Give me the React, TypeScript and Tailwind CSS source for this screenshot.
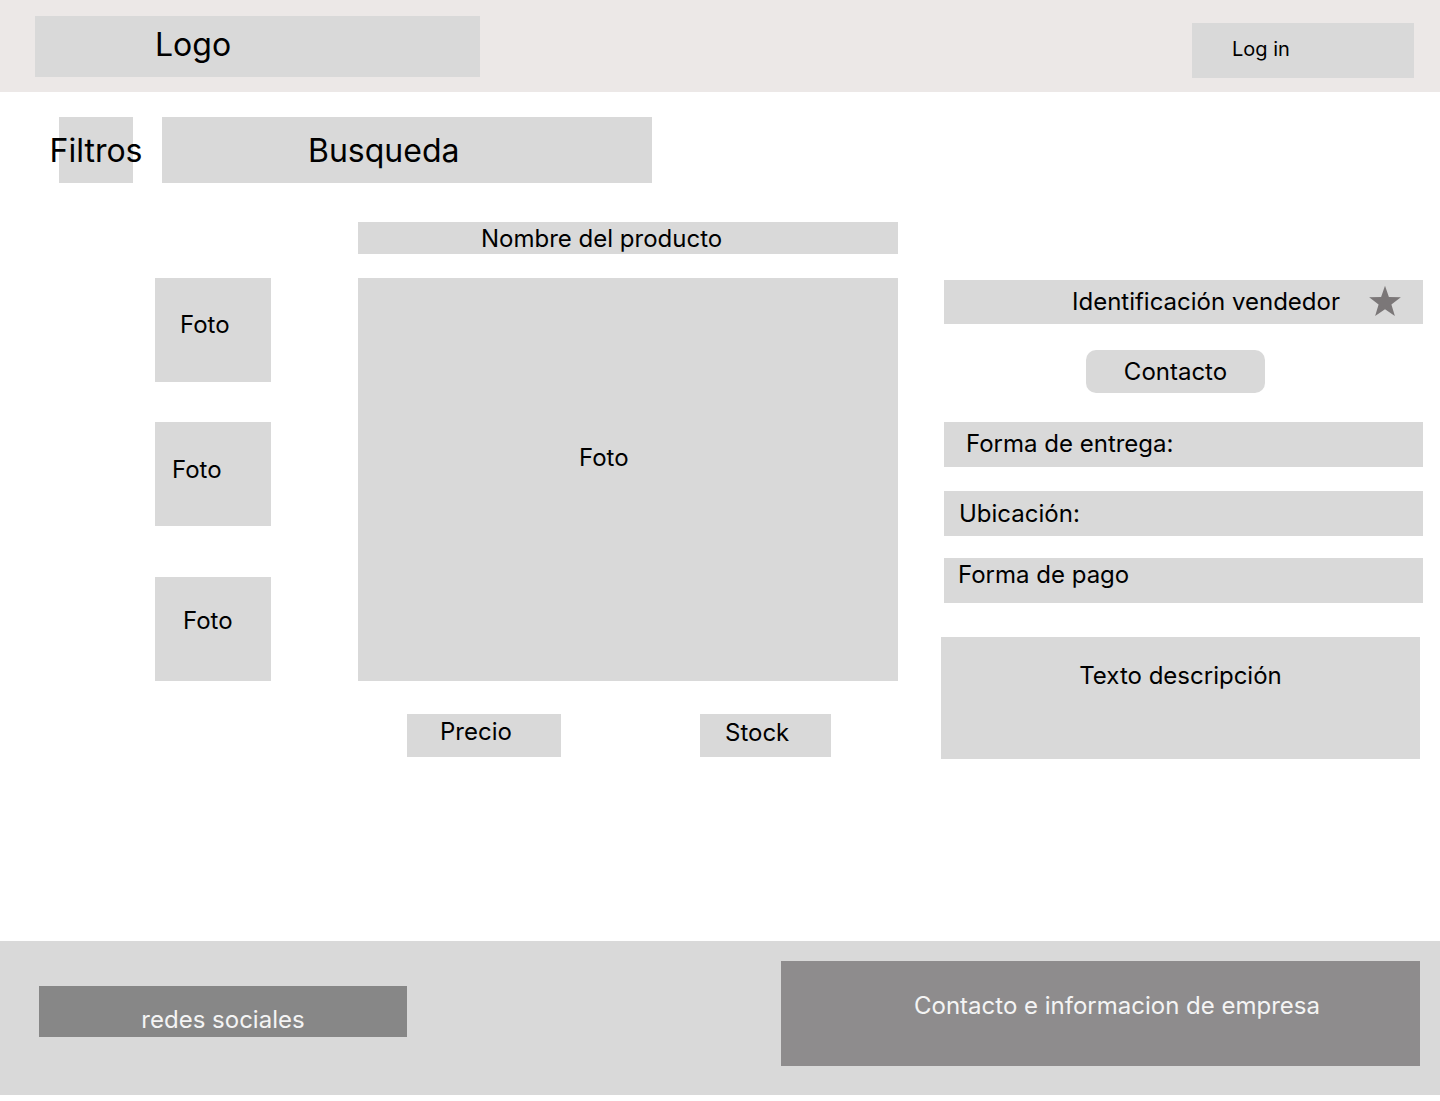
const font = { fontFamily: "Inter, 'Noto Sans', sans-serif" };

function Thumb({ pt, pl, mt }: { pt: string; pl: string; mt: string }) {
  return (
    <div className={`w-[116px] h-[104px] bg-[#d9d9d9] ${mt}`}>
      <div className={`${pt} ${pl} text-[24px] leading-[29px] text-black`}>Foto</div>
    </div>
  );
}

function Star() {
  return (
    <svg width="34" height="32" viewBox="0 0 24 23" className="shrink-0">
      <polygon
        points="12,0.5 14.8,8.6 23.4,8.8 16.6,14 19.1,22.3 12,17.4 4.9,22.3 7.4,14 0.6,8.8 9.2,8.6"
        fill="#7b7778"
      />
    </svg>
  );
}

export default function App() {
  return (
    <div className="w-[1440px] h-[1101px] bg-white flex flex-col text-black" style={font}>
      {/* Header */}
      <header className="h-[92px] shrink-0 bg-[#ece8e7] flex items-start">
        <div className="ml-[35px] mt-[16px] w-[445px] h-[61px] bg-[#d9d9d9] pt-[9px] pl-[120px] text-[32px] leading-[39px]">
          Logo
        </div>
        <div className="ml-auto mr-[26px] mt-[23px] w-[222px] h-[55px] bg-[#d9d9d9] pt-[14px] pl-[40px] text-[20px] leading-[24px]">
          Log in
        </div>
      </header>

      {/* Search row */}
      <div className="h-[91px] shrink-0 flex items-end">
        <div className="ml-[59px] w-[74px] h-[66px] bg-[#d9d9d9] flex items-center justify-center overflow-visible">
          <span className="whitespace-nowrap text-[32px] leading-[39px]">Filtros</span>
        </div>
        <div className="ml-[29px] w-[490px] h-[66px] bg-[#d9d9d9] flex items-center pl-[146px] text-[32px] leading-[39px]">
          Busqueda
        </div>
      </div>

      {/* Product */}
      <main className="h-[758px] shrink-0 flex items-start pl-[155px] pt-[39px]">
        <div className="w-[116px] flex flex-col">
          <Thumb mt="mt-[56px]" pt="pt-[32px]" pl="pl-[25px]" />
          <Thumb mt="mt-[40px]" pt="pt-[33px]" pl="pl-[17px]" />
          <Thumb mt="mt-[51px]" pt="pt-[29px]" pl="pl-[28px]" />
        </div>

        <div className="ml-[87px] w-[540px] flex flex-col">
          <div className="h-[32px] bg-[#d9d9d9] pt-[2px] pl-[123px] text-[24px] leading-[29px]">
            Nombre del producto
          </div>
          <div className="mt-[24px] h-[403px] bg-[#d9d9d9] pt-[165px] pl-[221px] text-[24px] leading-[29px]">
            Foto
          </div>
          <div className="mt-[33px] flex">
            <div className="ml-[49px] w-[154px] h-[43px] bg-[#d9d9d9] pt-[3px] pl-[33px] text-[24px] leading-[29px]">
              Precio
            </div>
            <div className="ml-[139px] w-[131px] h-[43px] bg-[#d9d9d9] pt-[4px] pl-[25px] text-[24px] leading-[29px]">
              Stock
            </div>
          </div>
        </div>

        <div className="ml-[43px] w-[482px] mt-[58px] flex flex-col">
          <div className="ml-[3px] w-[479px] h-[44px] bg-[#d9d9d9] flex items-center pb-[2px] pl-[128px] text-[24px] leading-[29px]">
            <span>Identificación vendedor</span>
            <span className="ml-[28px]">
              <Star />
            </span>
          </div>
          <div className="mt-[26px] ml-[145px] w-[179px] h-[43px] rounded-[10px] bg-[#d9d9d9] flex items-center justify-center text-[24px] leading-[29px]">
            Contacto
          </div>
          <div className="mt-[29px] ml-[3px] w-[479px] h-[45px] bg-[#d9d9d9] flex items-center pb-[2px] pl-[22px] text-[24px] leading-[29px]">
            Forma de entrega:
          </div>
          <div className="mt-[24px] ml-[3px] w-[479px] h-[45px] bg-[#d9d9d9] flex items-center pl-[15px] text-[24px] leading-[29px]">
            Ubicación:
          </div>
          <div className="mt-[22px] ml-[3px] w-[479px] h-[45px] bg-[#d9d9d9] pt-[2px] pl-[14px] text-[24px] leading-[29px]">
            Forma de pago
          </div>
          <div className="mt-[34px] w-[479px] h-[122px] bg-[#d9d9d9] pt-[24px] text-center text-[24px] leading-[29px]">
            Texto descripción
          </div>
        </div>
      </main>

      {/* Footer */}
      <footer className="h-[154px] shrink-0 bg-[#d9d9d9] flex items-start">
        <div className="ml-[39px] mt-[45px] w-[368px] h-[51px] bg-[#878787] pt-[19px] text-center text-[24px] leading-[29px] text-[#f4f4f4]">
          redes sociales
        </div>
        <div className="ml-auto mr-[20px] mt-[20px] w-[639px] h-[105px] bg-[#8e8c8d] pt-[30px] pl-[133px] text-[24px] leading-[29px] text-[#f4f4f4]">
          Contacto e informacion de empresa
        </div>
      </footer>
    </div>
  );
}
